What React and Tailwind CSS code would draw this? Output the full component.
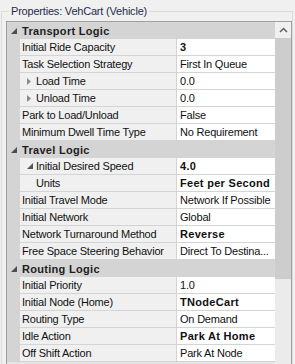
import React from "react";

const rows = [
  { cat: "Transport Logic" },
  { name: "Initial Ride Capacity", value: "3", bold: true },
  { name: "Task Selection Strategy", value: "First In Queue" },
  { name: "Load Time", value: "0.0", indent: true, toggle: "collapsed" },
  { name: "Unload Time", value: "0.0", indent: true, toggle: "collapsed" },
  { name: "Park to Load/Unload", value: "False" },
  { name: "Minimum Dwell Time Type", value: "No Requirement" },
  { cat: "Travel Logic" },
  { name: "Initial Desired Speed", value: "4.0", bold: true, indent: true, toggle: "expanded" },
  { name: "Units", value: "Feet per Second", bold: true, indent: true },
  { name: "Initial Travel Mode", value: "Network If Possible" },
  { name: "Initial Network", value: "Global" },
  { name: "Network Turnaround Method", value: "Reverse", bold: true },
  { name: "Free Space Steering Behavior", value: "Direct To Destina..." },
  { cat: "Routing Logic" },
  { name: "Initial Priority", value: "1.0" },
  { name: "Initial Node (Home)", value: "TNodeCart", bold: true },
  { name: "Routing Type", value: "On Demand" },
  { name: "Idle Action", value: "Park At Home", bold: true },
  { name: "Off Shift Action", value: "Park At Node" },
];

function Expanded({ color = "#4a4a4a" }) {
  return (
    <svg width="6" height="6" viewBox="0 0 6 6" className="shrink-0">
      <polygon points="6,0 6,6 0,6" fill={color} />
    </svg>
  );
}

function Collapsed() {
  return (
    <svg width="4" height="7" viewBox="0 0 4 7" className="shrink-0">
      <polygon points="0,0 4,3.5 0,7" fill="#8a8a8a" />
    </svg>
  );
}

function Row({ r }) {
  if (r.cat) {
    return (
      <div className="flex h-[17px] items-center bg-[#d4d4d4]">
        <div className="w-[15px] pl-[4px] flex items-center">
          <Expanded color="#4d4d4d" />
        </div>
        <span className="font-bold text-[#1e1e1e] tracking-[0.3px] leading-[16px]">{r.cat}</span>
      </div>
    );
  }
  return (
    <div className="flex h-[17px]">
      <div className="w-[13px] bg-[#d4d4d4]" />
      <div className="w-[156px] bg-[#f0f0f0] border-b border-[#d4d4d4] flex items-center overflow-hidden whitespace-nowrap">
        {r.indent ? (
          <>
            <div className="w-[16px] pl-[7px] flex items-center">
              {r.toggle === "collapsed" && <Collapsed />}
              {r.toggle === "expanded" && <Expanded color="#555555" />}
            </div>
            <span className="leading-[16px] text-[#111]">{r.name}</span>
          </>
        ) : (
          <span className="pl-[2px] leading-[16px] text-[#111]">{r.name}</span>
        )}
      </div>
      <div className="w-px bg-[#d4d4d4]" />
      <div className="flex-1 bg-white border-b border-[#d4d4d4] flex items-center pl-[3px] overflow-hidden whitespace-nowrap">
        <span className={r.bold ? "font-bold tracking-[0.3px] leading-[16px] text-[#111]" : "leading-[16px] text-[#111]"}>
          {r.value}
        </span>
      </div>
    </div>
  );
}

export default function App() {
  return (
    <div
      className="w-[295px] h-[364px] overflow-hidden bg-[#f0f0f0] pt-[11px] pl-[1px] text-[11px] tracking-[-0.2px]"
      style={{ fontFamily: '"Liberation Sans", Arial, sans-serif' }}
    >
      <div className="relative w-[292px] h-[400px] border border-[#dcdcdc]">
        <span className="absolute left-[7px] top-[-9px] px-[2px] bg-[#f0f0f0] leading-[16px] text-[#1f2d4a]">
          Properties: VehCart (Vehicle)
        </span>
        <div className="ml-[4px] mt-[9px] w-[286px] h-[380px] border border-[#a0a0a0] flex bg-[#e4e4e4]">
          <div className="w-[268px] flex flex-col">
            {rows.map((r, i) => (
              <Row key={i} r={r} />
            ))}
          </div>
          <div className="w-[16px] flex flex-col bg-[#ebebeb]">
            <div className="h-[16px] bg-[#f0f0f0] flex items-center justify-center">
              <svg width="9" height="6" viewBox="0 0 9 6">
                <polyline points="1,5 4.5,1.5 8,5" fill="none" stroke="#606060" strokeWidth="1.5" />
              </svg>
            </div>
            <div className="h-[241px] bg-[#cdcdcd]" />
          </div>
        </div>
      </div>
    </div>
  );
}
